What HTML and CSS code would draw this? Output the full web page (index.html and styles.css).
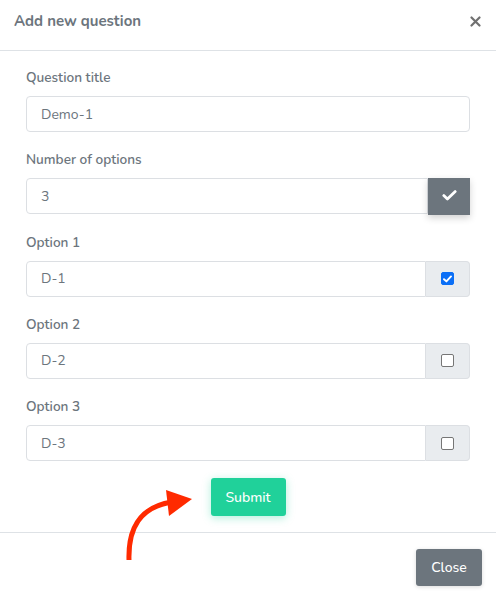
FILE: index.html
```html
<!DOCTYPE html>
<html lang="en">
<head>
<meta charset="utf-8">
<title>Add new question</title>
<link rel="stylesheet" href="styles.css">
</head>
<body>
<div class="modal">
  <div class="modal-header">
    <h5 class="modal-title">Add new question</h5>
    <button class="close" type="button" aria-label="Close">
      <svg width="11" height="11" viewBox="0 0 11 11"><path d="M1.5 1.5 L9.5 9.5 M9.5 1.5 L1.5 9.5" stroke="#707070" stroke-width="2.2" stroke-linecap="round"/></svg>
    </button>
  </div>
  <div class="modal-body">
    <div class="form-group">
      <label class="label">Question title</label>
      <div class="input-group"><input class="input" type="text" value="Demo-1"></div>
    </div>
    <div class="form-group">
      <label class="label">Number of options</label>
      <div class="input-group">
        <input class="input" type="text" value="3">
        <button class="btn-check" type="button">
          <svg width="15" height="11" viewBox="0 0 15 11"><path d="M1.8 5.6 L5.4 9 L13.2 1.6" fill="none" stroke="#fff" stroke-width="2.8" stroke-linecap="round" stroke-linejoin="round"/></svg>
        </button>
      </div>
    </div>
    <div class="form-group">
      <label class="label">Option 1</label>
      <div class="input-group">
        <input class="input" type="text" value="D-1">
        <span class="addon"><span class="cb checked"><svg width="9" height="8" viewBox="0 0 9 8"><path d="M1 4.2 L3.4 6.4 L8 1.4" fill="none" stroke="#fff" stroke-width="1.9" stroke-linecap="round" stroke-linejoin="round"/></svg></span></span>
      </div>
    </div>
    <div class="form-group">
      <label class="label">Option 2</label>
      <div class="input-group">
        <input class="input" type="text" value="D-2">
        <span class="addon"><span class="cb"></span></span>
      </div>
    </div>
    <div class="form-group">
      <label class="label">Option 3</label>
      <div class="input-group">
        <input class="input" type="text" value="D-3">
        <span class="addon"><span class="cb"></span></span>
      </div>
    </div>
    <div class="submit-row">
      <button class="btn-submit" type="button">Submit</button>
      <svg class="arrow" width="80" height="80" viewBox="0 0 80 80"><path d="M9 76 C 8 44, 20 23, 52 18" fill="none" stroke="#ff2a00" stroke-width="5"/><polygon points="46,6 72,15 49,32" fill="#ff2a00"/></svg>
    </div>
  </div>
  <div class="modal-footer">
    <button class="btn-close" type="button">Close</button>
  </div>
</div>
</body>
</html>
```
FILE: styles.css
```css
* { box-sizing: border-box; }
html, body { margin: 0; padding: 0; background: #fff; }
body {
  font-family: "Nunito", Lato, "Open Sans", sans-serif;
  color: #6c757d;
  width: 496px;
  height: 598px;
  overflow: hidden;
}
.modal { width: 496px; }
.modal-header {
  display: flex;
  justify-content: space-between;
  align-items: flex-start;
  padding: 10px 14px 0 14px;
  height: 51px;
  border-bottom: 1px solid #dee2e6;
}
.modal-title {
  margin: 0;
  font-size: 15px;
  line-height: 22px;
  font-weight: 700;
  color: #6c757d;
}
.close {
  border: 0;
  background: none;
  padding: 0;
  margin-top: 5px;
  margin-right: 1px;
  width: 12px;
  height: 12px;
  display: flex;
  align-items: center;
  justify-content: center;
}
.modal-body {
  padding: 16px 26px 16px 26px;
  position: relative;
}
.form-group { margin-bottom: 17.25px; }
.label {
  display: block;
  font-size: 13.6px;
  line-height: 21px;
  font-weight: 600;
  color: #6c757d;
  margin-bottom: 8px;
}
.input-group { display: flex; height: 36px; }
.input {
  flex: 1;
  min-width: 0;
  height: 36px;
  border: 1px solid #dcdfe3;
  border-radius: 4px;
  padding: 0 14px;
  font-family: inherit;
  font-size: 14px;
  color: #6c757d;
  background: #fff;
  outline: none;
}
.input-group .input:not(:last-child) {
  border-top-right-radius: 0;
  border-bottom-right-radius: 0;
}
.btn-check {
  width: 42px;
  height: 37px;
  border: 0;
  background: #6c757d;
  display: flex;
  align-items: center;
  justify-content: center;
  padding: 0 0 3px 0;
  box-shadow: 0 3px 7px rgba(0,0,0,0.18);
}
.addon {
  width: 44px;
  background: #e9ecef;
  border: 1px solid #dcdfe3;
  border-left: 0;
  border-radius: 0 4px 4px 0;
  display: flex;
  align-items: center;
  justify-content: center;
}
.cb {
  width: 13px;
  height: 13px;
  border: 1px solid #767676;
  border-radius: 2px;
  background: #fff;
  display: flex;
  align-items: center;
  justify-content: center;
}
.cb.checked { background: #0b6ff6; border-color: #0b6ff6; }
.submit-row {
  display: flex;
  justify-content: center;
  position: relative;
}
.btn-submit {
  width: 75px;
  height: 38px;
  border: 0;
  border-radius: 3px;
  background: #20d19a;
  color: #fff;
  font-family: inherit;
  font-size: 14px;
  font-weight: 500;
  box-shadow: 0 2px 8px rgba(32,209,154,0.35);
}
.arrow {
  position: absolute;
  left: 94px;
  top: 6px;
}
.modal-footer {
  border-top: 1px solid #dee2e6;
  padding: 16px 14px 0 0;
  display: flex;
  justify-content: flex-end;
}
.btn-close {
  width: 66px;
  height: 37px;
  border: 0;
  border-radius: 3px;
  background: #6c757d;
  color: #fff;
  font-family: inherit;
  font-size: 14px;
  font-weight: 500;
  box-shadow: 0 1px 4px rgba(0,0,0,0.15);
}
```
